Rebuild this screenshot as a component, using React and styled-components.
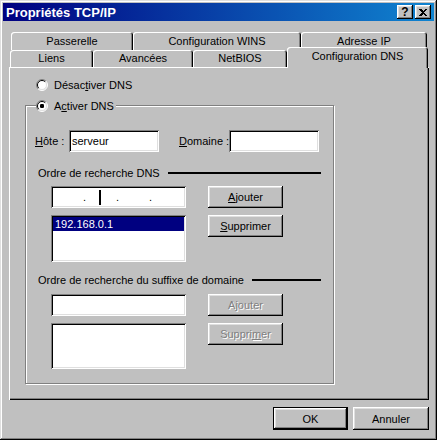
import React from "react";
import styled, { createGlobalStyle } from "styled-components";

const GlobalStyle = createGlobalStyle`
  html, body {
    margin: 0;
    padding: 0;
    background: #c0c0c0;
  }
  body {
    font-family: "Liberation Sans", Arial, sans-serif;
    font-size: 11px;
    color: #000;
  }
  * {
    box-sizing: border-box;
  }
`;

const raised = `
  box-shadow: inset -1px -1px #000, inset 1px 1px #fff,
    inset -2px -2px #808080, inset 2px 2px #dfdfdf;
`;

const sunken = `
  box-shadow: inset 1px 1px #808080, inset -1px -1px #fff,
    inset 2px 2px #000, inset -2px -2px #dfdfdf;
`;

const Window = styled.div`
  width: 437px;
  height: 440px;
  padding: 3px;
  background: #c0c0c0;
  display: flex;
  flex-direction: column;
  box-shadow: inset -1px -1px #000, inset 1px 1px #dfdfdf,
    inset -2px -2px #808080, inset 2px 2px #fff;
`;

const TitleBar = styled.div`
  height: 18px;
  display: flex;
  align-items: center;
  justify-content: space-between;
  padding: 0 3px 0 3px;
  background: linear-gradient(90deg, #000080, #1084d0);
  color: #fff;
  font-weight: bold;
  font-size: 13px;
`;

const TitleButtons = styled.div`
  display: flex;
  gap: 2px;
`;

const TitleButton = styled.div`
  width: 16px;
  height: 14px;
  background: #c0c0c0;
  color: #000;
  display: flex;
  align-items: center;
  justify-content: center;
  font-size: 12px;
  font-weight: bold;
  line-height: 1;
  ${raised}
`;

const Body = styled.div`
  padding: 11px 5px 0 6px;
  display: flex;
  flex-direction: column;
`;

const TabRow = styled.div`
  display: flex;
  height: ${(p) => p.h}px;
  padding-left: ${(p) => p.indent}px;
  align-items: flex-end;
`;

const Tab = styled.div`
  width: ${(p) => p.w}px;
  height: ${(p) => (p.active ? 21 : p.h)}px;
  margin-bottom: ${(p) => (p.active ? -1 : 0)}px;
  padding-bottom: ${(p) => (p.active ? 4 : 1)}px;
  position: relative;
  z-index: ${(p) => (p.active ? 2 : 0)};
  background: #c0c0c0;
  display: flex;
  align-items: center;
  justify-content: center;
  white-space: nowrap;
  border-radius: 3px 3px 0 0;
  box-shadow: inset 1px 1px #fff, inset -1px 0 #000, inset -2px 0 #808080;
`;

const Panel = styled.div`
  width: 420px;
  height: 333px;
  padding: 11px 0 0 16px;
  background: #c0c0c0;
  box-shadow: inset 1px 1px #fff, inset -1px -1px #000, inset -2px -2px #808080;
`;

const RadioLabel = styled.div`
  display: flex;
  align-items: center;
  gap: 6px;
  height: 13px;
  white-space: nowrap;
  margin-left: ${(p) => p.indent || 0}px;
`;

const GroupBox = styled.div`
  position: relative;
  width: 309px;
  height: 279px;
  margin-top: 14px;
  border: 1px solid #808080;
  box-shadow: 1px 1px 0 #fff, inset 1px 1px 0 #fff;
  display: flex;
  flex-direction: column;
`;

const Legend = styled.div`
  position: absolute;
  top: -7px;
  left: 10px;
  padding-right: 2px;
  background: #c0c0c0;
`;

const HostRow = styled.div`
  display: flex;
  align-items: center;
  margin-top: 24px;
  padding-left: 9px;
`;

const FieldLabel = styled.div`
  width: ${(p) => p.w}px;
  flex-shrink: 0;
  white-space: nowrap;
  margin-left: ${(p) => p.gap || 0}px;
`;

const TextField = styled.div`
  width: ${(p) => p.w}px;
  flex-shrink: 0;
  height: 22px;
  background: #fff;
  padding: 0 3px;
  display: flex;
  align-items: center;
  ${sunken}
`;

const SectionHeader = styled.div`
  display: flex;
  align-items: center;
  height: 13px;
  white-space: nowrap;
  margin-top: ${(p) => p.top}px;
  padding-left: 12px;
  margin-right: 12px;
`;

const HeaderLine = styled.div`
  flex: 1;
  height: 2px;
  margin-left: 8px;
  background: #000;
`;

const SectionBody = styled.div`
  display: flex;
  margin-top: ${(p) => p.top}px;
  padding-left: 25px;
`;

const Column = styled.div`
  display: flex;
  flex-direction: column;
  gap: 7px;
  margin-left: ${(p) => p.gap || 0}px;
`;

const IpField = styled.div`
  width: 135px;
  height: 22px;
  background: #fff;
  padding: 2px;
  display: flex;
  align-items: center;
  ${sunken}
`;

const IpSegment = styled.div`
  width: 33px;
  height: 18px;
  display: flex;
  align-items: center;
  justify-content: flex-end;
`;

const Dot = styled.span`
  width: 3px;
  line-height: 1;
  font-size: 11px;
  margin-top: 1px;
`;

const Caret = styled.span`
  width: 2px;
  height: 15px;
  background: #000;
  margin-left: 13px;
  margin-right: auto;
`;

const ListBox = styled.div`
  width: 135px;
  height: ${(p) => p.h}px;
  background: #fff;
  padding: 2px;
  ${sunken}
`;

const ListItem = styled.div`
  height: 14px;
  padding-left: 2px;
  display: flex;
  align-items: center;
  background: ${(p) => (p.selected ? "#000080" : "transparent")};
  color: ${(p) => (p.selected ? "#fff" : "#000")};
`;

const Button = styled.div`
  width: ${(p) => p.w || 75}px;
  height: ${(p) => p.h || 22}px;
  background: #c0c0c0;
  display: flex;
  align-items: center;
  justify-content: center;
  color: ${(p) => (p.disabled ? "#808080" : "#000")};
  text-shadow: ${(p) => (p.disabled ? "1px 1px 0 #fff" : "none")};
  ${(p) =>
    p.isDefault
      ? `box-shadow: inset 0 0 0 1px #000, inset -2px -2px #000, inset 2px 2px #fff,
          inset -3px -3px #808080, inset 3px 3px #dfdfdf;`
      : raised}
`;

const Footer = styled.div`
  display: flex;
  justify-content: flex-end;
  gap: 5px;
  margin-top: 7px;
`;

const Radio = ({ checked }) => (
  <svg width="12" height="12" viewBox="0 0 12 12">
    <circle cx="6" cy="6" r="5" fill="#fff" />
    <path d="M2.1 9.9A5.5 5.5 0 0 1 9.9 2.1" fill="none" stroke="#808080" />
    <path d="M9.9 2.1A5.5 5.5 0 0 1 2.1 9.9" fill="none" stroke="#fff" />
    <path d="M2.8 9.2A4.5 4.5 0 0 1 9.2 2.8" fill="none" stroke="#000" />
    <path d="M9.2 2.8A4.5 4.5 0 0 1 2.8 9.2" fill="none" stroke="#dfdfdf" />
    {checked && <rect x="4" y="4" width="4" height="4" rx="1.2" fill="#000" />}
  </svg>
);

const CloseGlyph = () => (
  <svg width="8" height="7" viewBox="0 0 8 7" shapeRendering="crispEdges">
    <path d="M0 0h2l2 2 2-2h2L5 3.5 8 7H6L4 5 2 7H0l3-3.5z" fill="#000" />
  </svg>
);

const backTabs = [
  { label: "Passerelle", w: 122 },
  { label: "Configuration WINS", w: 168 },
  { label: "Adresse IP", w: 126 },
];

const frontTabs = [
  { label: "Liens", w: 83 },
  { label: "Avancées", w: 100 },
  { label: "NetBIOS", w: 94 },
  { label: "Configuration DNS", w: 141, active: true },
];

const App = () => (
  <>
    <GlobalStyle />
    <Window>
      <TitleBar>
        <span>Propriétés TCP/IP</span>
        <TitleButtons>
          <TitleButton>?</TitleButton>
          <TitleButton>
            <CloseGlyph />
          </TitleButton>
        </TitleButtons>
      </TitleBar>
      <Body>
        <TabRow h={18} indent={2}>
          {backTabs.map((t) => (
            <Tab key={t.label} w={t.w} h={18}>
              {t.label}
            </Tab>
          ))}
        </TabRow>
        <TabRow h={17} indent={1}>
          {frontTabs.map((t) => (
            <Tab key={t.label} w={t.w} h={17} active={t.active}>
              {t.label}
            </Tab>
          ))}
        </TabRow>
        <Panel>
          <RadioLabel indent={11}>
            <Radio />
            <span>
              Désac<u>t</u>iver DNS
            </span>
          </RadioLabel>
          <GroupBox>
            <Legend>
              <RadioLabel>
                <Radio checked />
                <span>
                  A<u>c</u>tiver DNS
                </span>
              </RadioLabel>
            </Legend>
            <HostRow>
              <FieldLabel w={34}>
                <u>H</u>ôte :
              </FieldLabel>
              <TextField w={90}>serveur</TextField>
              <FieldLabel w={50} gap={20}>
                <u>D</u>omaine :
              </FieldLabel>
              <TextField w={90} />
            </HostRow>

            <SectionHeader top={14}>
              <span>Ordre de recherche DNS</span>
              <HeaderLine />
            </SectionHeader>
            <SectionBody top={7}>
              <Column>
                <IpField>
                  <IpSegment>
                    <Dot>.</Dot>
                  </IpSegment>
                  <IpSegment>
                    <Caret />
                    <Dot>.</Dot>
                  </IpSegment>
                  <IpSegment>
                    <Dot>.</Dot>
                  </IpSegment>
                </IpField>
                <ListBox h={47}>
                  <ListItem selected>192.168.0.1</ListItem>
                </ListBox>
              </Column>
              <Column gap={22}>
                <Button>
                  <u>A</u>jouter
                </Button>
                <Button>
                  <u>S</u>upprimer
                </Button>
              </Column>
            </SectionBody>

            <SectionHeader top={11}>
              <span>Ordre de recherche du suffixe de domaine</span>
              <HeaderLine />
            </SectionHeader>
            <SectionBody top={8}>
              <Column>
                <TextField w={135} />
                <ListBox h={46} />
              </Column>
              <Column gap={22}>
                <Button disabled>
                  A<u>j</u>outer
                </Button>
                <Button disabled>
                  Suppri<u>m</u>er
                </Button>
              </Column>
            </SectionBody>
          </GroupBox>
        </Panel>
        <Footer>
          <Button w={75} h={23} isDefault>
            OK
          </Button>
          <Button w={76} h={23}>
            Annuler
          </Button>
        </Footer>
      </Body>
    </Window>
  </>
);

export default App;
